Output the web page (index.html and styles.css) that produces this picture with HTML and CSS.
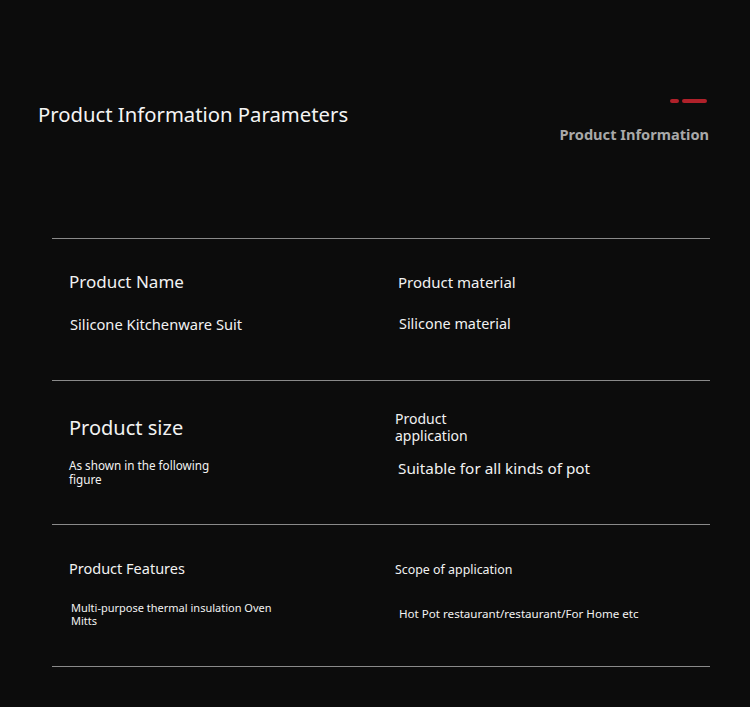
FILE: index.html
```html
<!DOCTYPE html>
<html lang="en">
<head>
<meta charset="utf-8">
<title>Product Information Parameters</title>
<link rel="stylesheet" href="styles.css">
</head>
<body>
<div class="page">
  <header class="header">
    <h1 class="title">Product Information Parameters</h1>
    <div class="badge">
      <div class="dashes"><span class="dash short"></span><span class="dash long"></span></div>
      <div class="subtitle">Product Information</div>
    </div>
  </header>
  <section class="table">
    <div class="row row1">
      <div class="cell left">
        <div class="label l1">Product Name</div>
        <div class="value v1">Silicone Kitchenware Suit</div>
      </div>
      <div class="cell right">
        <div class="label r1">Product material</div>
        <div class="value rv1">Silicone material</div>
      </div>
    </div>
    <div class="row row2">
      <div class="cell left">
        <div class="label l2">Product size</div>
        <div class="value v2">As shown in the following figure</div>
      </div>
      <div class="cell right">
        <div class="label r2">Product<br>application</div>
        <div class="value rv2">Suitable for all kinds of pot</div>
      </div>
    </div>
    <div class="row row3">
      <div class="cell left">
        <div class="label l3">Product Features</div>
        <div class="value v3">Multi-purpose thermal insulation Oven Mitts</div>
      </div>
      <div class="cell right">
        <div class="label r3">Scope of application</div>
        <div class="value rv3">Hot Pot restaurant/restaurant/For Home etc</div>
      </div>
    </div>
  </section>
</div>
</body>
</html>
```

FILE: styles.css
```css
html, body {
  margin: 0;
  padding: 0;
  background: #0c0c0c;
}
body {
  font-family: "Noto Sans", "Open Sans", sans-serif;
  color: #f2f2f2;
  width: 750px;
  height: 707px;
  overflow: hidden;
}
.header {
  display: flex;
  justify-content: space-between;
  align-items: flex-start;
  height: 238px;
  box-sizing: border-box;
  padding: 99px 41px 0 38px;
}
.title {
  margin: 3px 0 0;
  font-size: 20.3px;
  font-weight: 400;
  line-height: 1.2;
  color: #f4f4f4;
}
.badge {
  display: flex;
  flex-direction: column;
  align-items: flex-end;
}
.dashes {
  display: flex;
  gap: 3px;
  margin-right: 2px;
  margin-bottom: 23px;
}
.dash {
  display: block;
  height: 4px;
  border-radius: 2px;
  background: #b0212a;
}
.dash.short { width: 9px; }
.dash.long { width: 25px; }
.subtitle {
  font-size: 14.6px;
  font-weight: 700;
  line-height: 1.2;
  color: #a9a9a9;
}
.table {
  margin-left: 52px;
  width: 658px;
  border-bottom: 1px solid #8a8a8a;
}
.row {
  display: grid;
  grid-template-columns: 326px 1fr;
  padding-left: 17px;
  border-top: 1px solid #8a8a8a;
  box-sizing: border-box;
}
.row1 { height: 142px; }
.row2 { height: 144px; }
.row3 { height: 142px; }
.label, .value {
  line-height: 1.2;
  color: #f2f2f2;
}
.l1 { margin-top: 33px; font-size: 17px; }
.v1 { margin-top: 24px; margin-left: 1px; font-size: 14.7px; }
.r1 { margin-top: 34px; margin-left: 3px; font-size: 15px; }
.rv1 { margin-top: 24px; margin-left: 4px; font-size: 14.4px; }
.l2 { margin-top: 35px; font-size: 20px; }
.v2 { margin-top: 19px; font-size: 11.7px; line-height: 13.5px; width: 150px; }
.r2 { margin-top: 29px; font-size: 14px; line-height: 17px; }
.rv2 { margin-top: 15px; margin-left: 3px; font-size: 15.3px; }
.l3 { margin-top: 35px; font-size: 14.5px; }
.v3 { margin-top: 24px; margin-left: 2px; font-size: 11px; line-height: 13px; width: 215px; }
.r3 { margin-top: 38px; font-size: 12.4px; }
.rv3 { margin-top: 29px; margin-left: 4px; font-size: 11.6px; }
```
